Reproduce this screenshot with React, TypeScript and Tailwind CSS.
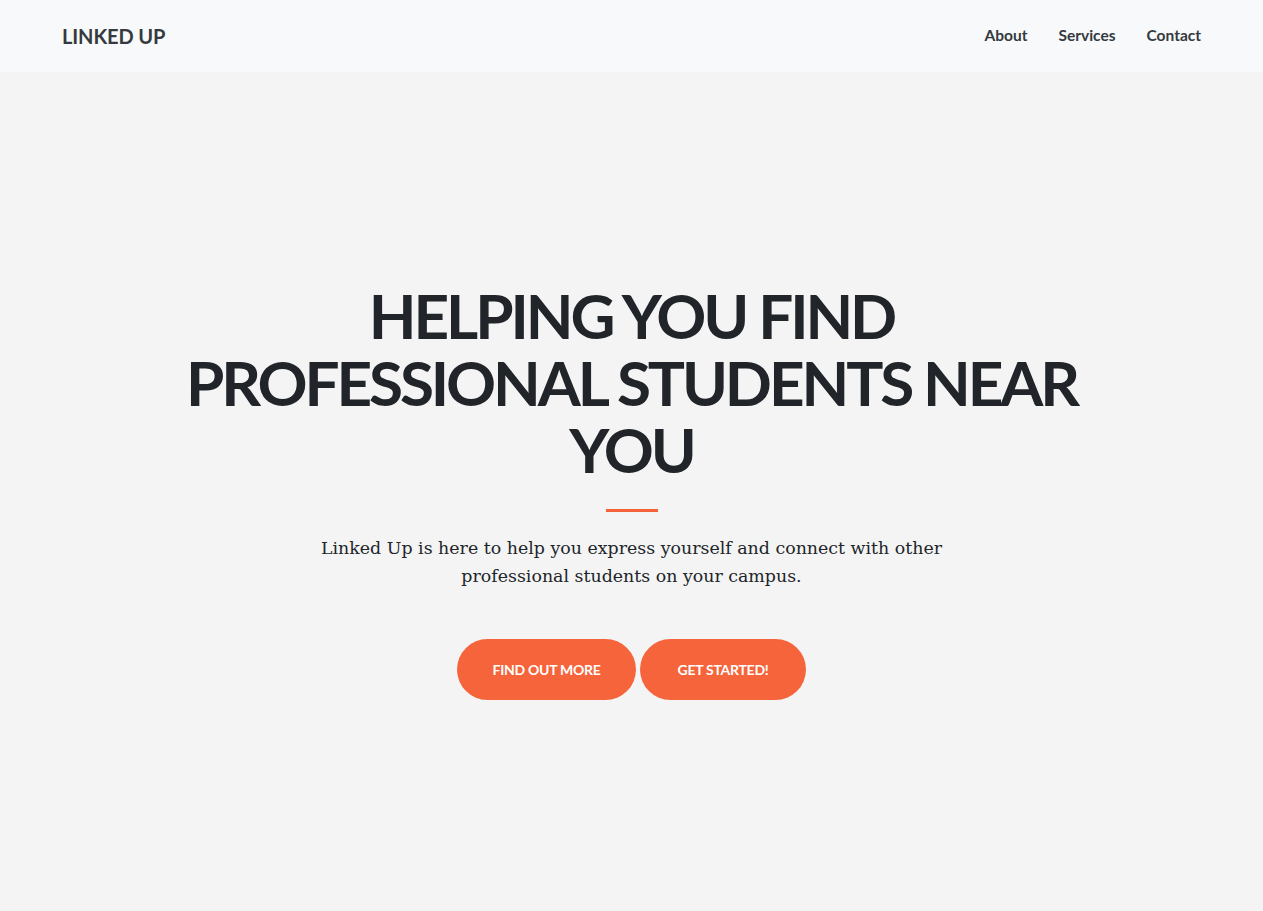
const links = ["About", "Services", "Contact"];

export default function App() {
  return (
    <div className="min-h-screen bg-[#f4f4f4] font-['Lato',sans-serif]">
      <nav className="h-[72px] bg-[#f8f9fa] flex items-center justify-between pl-[62px] pr-[62px]">
        <span className="text-[20px] font-bold text-[#343a40] tracking-[-0.005em]">LINKED UP</span>
        <ul className="flex items-center gap-[31px] text-[15.5px] font-bold text-[#343a40]">
          {links.map((l) => (
            <li key={l}>{l}</li>
          ))}
        </ul>
      </nav>

      <section className="flex flex-col items-center pt-[210px] text-center">
        <h1 className="text-[62px] leading-[67px] font-bold uppercase text-[#212529] tracking-[-0.05em]">
          <span className="block">Helping You Find</span>
          <span className="block">Professional Students Near</span>
          <span className="block">You</span>
        </h1>
        <hr className="mt-[26px] w-[52px] border-0 h-[3px] bg-[#f4623a]" />
        <p className="mt-[22px] w-[660px] font-['DejaVu_Serif',serif] text-[17.4px] leading-[28px] text-[#212529]">
          Linked Up is here to help you express yourself and connect with other professional students on your campus.
        </p>
        <div className="mt-[49px] flex gap-[4px]">
          <button className="h-[61px] w-[179px] rounded-full bg-[#f5643a] text-white text-[14px] leading-none font-bold uppercase tracking-[-0.02em]">
            Find Out More
          </button>
          <button className="h-[61px] w-[166px] rounded-full bg-[#f5643a] text-white text-[14px] leading-none font-bold uppercase tracking-[-0.02em]">
            Get Started!
          </button>
        </div>
      </section>
    </div>
  );
}
